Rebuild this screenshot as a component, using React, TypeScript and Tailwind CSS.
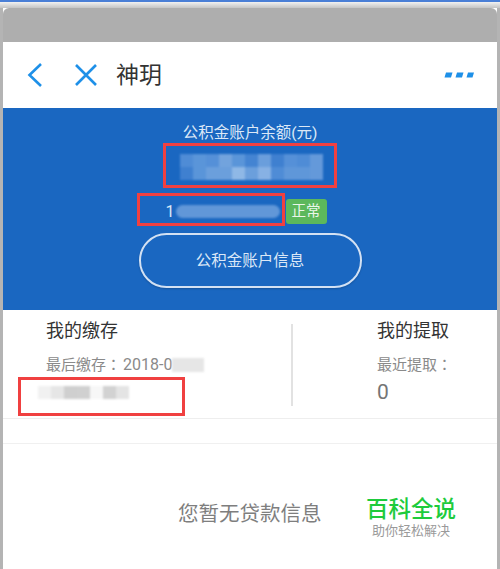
const font = { fontFamily: 'Roboto, "Noto Sans CJK SC", sans-serif' };

// blurred patches from the screenshot, one colour per cell
const balanceCells = [
  "#4f8cd6", "#5a95d9", "#5590d8", "#72a3dd", "#5a95d9", "#4484d2", "#6a9edc", "#3f80d0", "#5590d8", "#4f8cd6", "#6499da",
  "#3f80d0", "#5a95d9", "#6b9fdc", "#6b9fdc", "#8fb8e6", "#6b9fdc", "#87b1e4", "#4f8cd6", "#5f97d9", "#5f97d9", "#6499da",
];
const savedCells = ["#f1f1f1", "#e6e6e6", "#cfcfcf", "#d0d0d0", "#f7f7f7", "#d2d2d2", "#e4e4e4"];

function Mosaic({ cells, cols, cell, h }: { cells: string[]; cols: number; cell: number; h: number }) {
  return (
    <div className="grid blur-[1px]" style={{ gridTemplateColumns: `repeat(${cols}, ${cell}px)`, gridAutoRows: `${h}px` }}>
      {cells.map((c, i) => (
        <div key={i} style={{ background: c }} />
      ))}
    </div>
  );
}

export default function App() {
  return (
    <div className="w-[500px] h-[569px] overflow-hidden bg-[#b4b4b4] relative" style={font}>
      <div className="h-[2px] bg-[#4a7fd6]" />
      <div className="h-[6px] bg-gradient-to-b from-[#f2f2f2] to-[#c4c4c4]" />
      <div className="mx-[3px] h-[561px] flex flex-col bg-white">
        <div className="h-[34px] bg-[#aeaeae] rounded-t-[6px] shrink-0" />

        {/* nav */}
        <div className="h-[66px] shrink-0 flex items-center pl-[23px] pr-[23px]">
          <svg width="18" height="26" viewBox="0 0 18 26" fill="none" stroke="#1e90e8" strokeWidth="2.6">
            <path d="M15 2 L3.5 13 L15 24" />
          </svg>
          <svg className="ml-[30px]" width="24" height="24" viewBox="0 0 24 24" fill="none" stroke="#1e90e8" strokeWidth="2.6">
            <path d="M2 2 L22 22 M22 2 L2 22" />
          </svg>
          <span className="ml-[18px] text-[23px] leading-none text-[#333333]">神玥</span>
          <svg className="ml-auto" width="30" height="8" viewBox="0 0 30 8" fill="#1e90e8">
            <path d="M2 1.5 H8.5 L7 6.5 H0.5 Z M13 1.5 H19.5 L18 6.5 H11.5 Z M24 1.5 H30 L28.5 6.5 H22.5 Z" />
          </svg>
        </div>

        {/* balance */}
        <div className="h-[202px] shrink-0 bg-[#1a67c1] flex flex-col items-center relative">
          <p className="mt-[15px] text-[15.5px] leading-[20px] text-[#dbe8f7]">公积金账户余额(元)</p>
          <div className="mt-[11px] ml-[3px]">
            <Mosaic cells={balanceCells} cols={11} cell={13} h={13} />
          </div>
          <div className="mt-[19px] flex items-center ml-[-8px]">
            <span className="text-[16px] leading-[22px] text-[#dbe8f7]">1</span>
            <div className="ml-[1px] w-[104px] h-[13px] rounded-full bg-[#6197d8] blur-[1px]" />
            <span className="ml-[6px] w-[41px] h-[25px] rounded-[3px] bg-[#5cb85c] text-[#e9f6e9] text-[14.5px] leading-[25px] text-center">正常</span>
          </div>
          <div className="mt-[9px] w-[223px] h-[55px] pt-[2px] rounded-full border-2 border-[#d3e1f3] flex items-center justify-center text-[15.5px] text-[#dbe8f7] shadow-[0_1px_2px_rgba(0,0,0,0.2)]">
            公积金账户信息
          </div>
          <div className="absolute left-[160px] top-[35px] w-[174px] h-[45px] border-[3px] border-[#f04040]" />
          <div className="absolute left-[134px] top-[85px] w-[148px] h-[33px] border-[3px] border-[#f04040]" />
        </div>

        {/* deposits / withdrawals */}
        <div className="h-[109px] shrink-0 flex border-b border-[#eeeeee] relative">
          <div className="w-[288px] pl-[43px] pt-[9px]">
            <p className="text-[18px] leading-[24px] text-[#333333]">我的缴存</p>
            <div className="mt-[11px] flex items-center">
              <span className="text-[15px] leading-[20px] text-[#8a8a8a]">
                最后缴存<span className="font-['Noto_Sans_CJK_TC']">：</span>
                <span className="ml-[2px] text-[16px]">2018-0</span>
              </span>
              <div className="w-[32px] h-[14px] bg-[#e6e6e6] blur-[1px]" />
            </div>
            <div className="mt-[11px] ml-[-8px]">
              <Mosaic cells={savedCells} cols={7} cell={13} h={13} />
            </div>
          </div>
          <div className="w-[2px] h-[82px] mt-[14px] bg-[#e2e2e2]" />
          <div className="ml-[84px] pt-[9px]">
            <p className="text-[18px] leading-[24px] text-[#333333]">我的提取</p>
            <p className="mt-[11px] text-[15px] leading-[20px] text-[#8a8a8a]">
              最近提取<span className="font-['Noto_Sans_CJK_TC']">：</span>
            </p>
            <p className="mt-[4px] text-[21px] leading-[26px] text-[#757575]">0</p>
          </div>
          <div className="absolute left-[15px] top-[67px] w-[167px] h-[39px] border-[3px] border-[#f04040]" />
        </div>

        <div className="h-[25px] shrink-0 border-b border-[#f0f0f0] bg-white" />

        {/* empty state and watermark */}
        <div className="flex-1 bg-white relative">
          <p className="absolute left-[175px] top-[56px] text-[20.5px] leading-[28px] text-[#7e7e7e]">您暂无贷款信息</p>
          <div className="absolute left-[363px] top-[51px] flex flex-col items-center">
            <p className="text-[22.5px] leading-[28px] font-medium text-[#1ecb3c]">百科全说</p>
            <p className="text-[13px] leading-[16px] text-[#9a9a9a]">助你轻松解决</p>
          </div>
        </div>
      </div>
    </div>
  );
}
